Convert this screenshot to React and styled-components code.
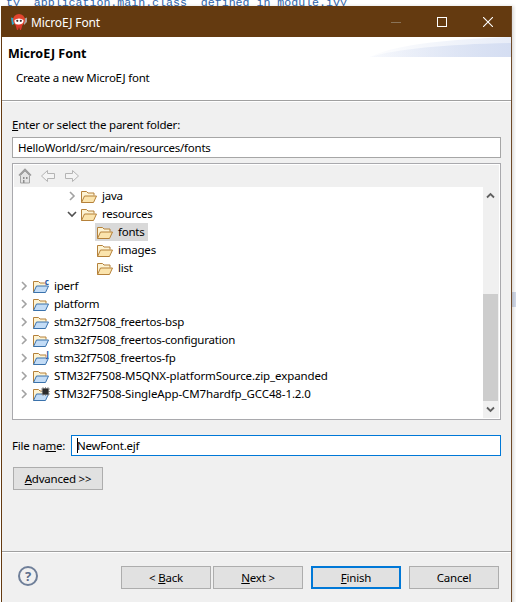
import React from "react";
import styled, { createGlobalStyle } from "styled-components";

const Global = createGlobalStyle`
  html, body { margin: 0; padding: 0; background: #fff; }
  body { font-family: "Noto Sans", sans-serif; font-size: 11.5px; letter-spacing: -0.22px; color: #000; }
`;

const Page = styled.div`
  position: relative;
  width: 516px;
  height: 602px;
  overflow: hidden;
  background: #fff;
`;

const BackdropCode = styled.div`
  height: 6px;
  overflow: hidden;
  padding-left: 6px;
  font: 11.6px/6px "Liberation Mono", monospace;
  letter-spacing: 0;
  color: #2f63a8;
  white-space: pre;
`;

const BackdropPatch = styled.div`
  position: absolute;
  left: 512px;
  top: 292px;
  width: 4px;
  height: 15px;
  background: #d3dbea;
`;

const Window = styled.div`
  position: relative;
  width: 511px;
  height: 600px;
  margin-left: 1px;
  box-sizing: border-box;
  border: 1px solid #643a10;
  border-right-color: #6f4a28;
  display: flex;
  flex-direction: column;
  background: #f0f0f0;
  box-shadow: 2px 0 3px rgba(0, 0, 0, 0.14);
`;

const TitleBar = styled.div`
  height: 30px;
  flex: none;
  background: #643a10;
  color: #fff;
  display: flex;
  align-items: center;
  padding-left: 8px;
`;

const TitleText = styled.span`
  margin-left: 3px;
  font-size: 12px;
  letter-spacing: -0.15px;
  flex: 1;
`;

const WinButton = styled.div`
  width: 46px;
  height: 30px;
  display: flex;
  align-items: center;
  justify-content: center;
`;

const Header = styled.div`
  height: 63px;
  flex: none;
  position: relative;
  background: #fff;
  border-bottom: 1px solid #a0a0a0;
  box-shadow: 0 1px 0 #fff;
  padding-left: 6px;
`;

const HeaderTitle = styled.div`
  font-weight: 700;
  font-size: 12.5px;
  letter-spacing: 0;
  line-height: 16px;
  padding-top: 9px;
`;

const HeaderSub = styled.div`
  line-height: 16px;
  margin-top: 8px;
  padding-left: 8px;
`;

const Swoosh = styled.svg`
  position: absolute;
  top: 0;
  right: 0;
`;

const Body = styled.div`
  flex: 1;
  padding: 17px 10px 0;
  display: flex;
  flex-direction: column;
`;

const FieldLabel = styled.div`
  line-height: 14px;
`;

const TextBox = styled.div`
  height: 21px;
  box-sizing: border-box;
  background: #fff;
  border: 1px solid ${(p) => (p.$focused ? "#0078d7" : "#a6a6a6")};
  padding-left: 5px;
  line-height: 18px;
  display: flex;
  align-items: center;
  flex: ${(p) => (p.$grow ? 1 : "none")};
  margin-top: ${(p) => p.$mt || 0}px;
`;

const Caret = styled.span`
  width: 1px;
  height: 15px;
  background: #000;
  margin-right: -1px;
`;

const TreeBox = styled.div`
  height: 257px;
  box-sizing: border-box;
  margin-top: 5px;
  border: 1px solid #a9a9ad;
  padding: 1px;
  background: #fff;
`;

const TreeInner = styled.div`
  height: 100%;
  background: #f0f0f0;
  display: flex;
  flex-direction: column;
`;

const NavBar = styled.div`
  height: 22px;
  flex: none;
  display: flex;
  align-items: center;
  gap: 8px;
  padding-left: 4px;
`;

const TreeArea = styled.div`
  flex: 1;
  display: flex;
  min-height: 0;
  padding-right: 1px;
`;

const TreeList = styled.div`
  flex: 1;
  background: #fff;
  overflow: hidden;
`;

const Row = styled.div`
  height: 18px;
  display: flex;
  align-items: center;
  padding-left: ${(p) => 4 + p.$depth * 16}px;
  white-space: nowrap;
`;

const Twist = styled.span`
  width: 12px;
  height: 18px;
  flex: none;
  display: flex;
  align-items: center;
  justify-content: center;
`;

const Item = styled.span`
  height: 18px;
  display: flex;
  align-items: center;
  padding: 0 3px 0 2px;
  margin-left: 1px;
  background: ${(p) => (p.$selected ? "#d9d9d9" : "transparent")};
`;

const FolderWrap = styled.span`
  position: relative;
  width: 16px;
  height: 16px;
  flex: none;
  display: block;
`;

const Badge = styled.span`
  position: absolute;
  top: -1px;
  right: 0;
  font-size: 8px;
  font-weight: 700;
  line-height: 9px;
  letter-spacing: 0;
  color: #2a5aa5;
  text-shadow: 0 0 1px #fff;
`;

const Chip = styled.svg`
  position: absolute;
  top: 1px;
  right: -1px;
`;

const Label = styled.span`
  margin-left: 5px;
  margin-bottom: 2px;
  letter-spacing: ${(p) => (p.$wide ? "-0.11px" : "inherit")};
`;

const ScrollBar = styled.div`
  width: 15px;
  flex: none;
  display: flex;
  flex-direction: column;
`;

const ScrollBtn = styled.div`
  height: 17px;
  flex: none;
  display: flex;
  align-items: center;
  justify-content: center;
`;

const ScrollTrack = styled.div`
  flex: 1;
  padding-top: ${(p) => p.$offset}px;
`;

const ScrollThumb = styled.div`
  height: ${(p) => p.$size}px;
  background: #cdcdcd;
`;

const FileRow = styled.div`
  display: flex;
  align-items: center;
  margin-top: 15px;
`;

const FileLabel = styled.span`
  width: 59px;
  flex: none;
`;

const Button = styled.div`
  width: 90px;
  height: 23px;
  box-sizing: border-box;
  background: #e1e1e1;
  border: ${(p) => (p.$primary ? "2px solid #0078d7" : "1px solid #adadad")};
  display: flex;
  align-items: center;
  justify-content: center;
  line-height: 16px;
`;

const AdvancedWrap = styled.div`
  margin: 11px 0 0 1px;
`;

const Footer = styled.div`
  height: 54px;
  box-sizing: border-box;
  flex: none;
  border-top: 1px solid #a0a0a0;
  box-shadow: inset 0 1px 0 #fff;
  display: flex;
  align-items: flex-start;
  padding: 14px 12px 0 16px;
`;

const HelpCircle = styled.div`
  width: 20px;
  height: 20px;
  box-sizing: border-box;
  border: 2px solid #6f7f99;
  border-radius: 50%;
  color: #5b6c8a;
  font-weight: 700;
  font-size: 13px;
  letter-spacing: 0;
  line-height: 16px;
  text-align: center;
  flex: none;
  margin-right: auto;
`;

const FooterButtons = styled.div`
  display: flex;
  gap: 2px;
`;

const ButtonGroup = styled.div`
  display: flex;
  gap: 8px;
  margin-left: 8px;
`;

const Mn = styled.span`
  text-decoration: underline;
`;

const Logo = () => (
  <svg width="18" height="18" viewBox="0 0 18 18">
    <path d="M1 4.500l3.500 1v5l-2.500 1.500z" fill="#2fa6c9" />
    <path d="M13.500 6l3.500-1.500v4.500l-3 3z" fill="#a9a4a0" />
    <circle cx="9" cy="7" r="6" fill="#e2452f" />
    <path d="M4.500 7q4.500-3 9 0q.5 4-4.500 4.500t-4.500-4.500z" fill="#fff" />
    <circle cx="7.300" cy="7.800" r="1.100" fill="#402a2a" />
    <circle cx="10.800" cy="7.800" r="1.100" fill="#402a2a" />
    <path d="M5.500 12l1.500 5h1l1-3 1 3h1l1.500-5z" fill="#d8392b" />
  </svg>
);

const Minimize = () => (
  <svg width="10" height="10" viewBox="0 0 10 10">
    <path d="M0 5.500h10" stroke="#8a7358" strokeWidth="1" />
  </svg>
);
const Maximize = () => (
  <svg width="10" height="10" viewBox="0 0 10 10">
    <rect x=".5" y=".5" width="9" height="9" fill="none" stroke="#fff" />
  </svg>
);
const Close = () => (
  <svg width="10" height="10" viewBox="0 0 10 10">
    <path d="M0 0l10 10M10 0L0 10" stroke="#fff" strokeWidth="1.100" />
  </svg>
);

const Home = () => (
  <svg width="14" height="16" viewBox="0 0 14 16">
    <path d="M1 7.500L7 1.500l6 6" fill="none" stroke="#9a9a9a" strokeWidth="1.600" />
    <path d="M2.500 7.500V15h9V7.500L7 3z" fill="#e4e4e4" stroke="#a3a3a3" />
    <path d="M5 9h1.500v2H5zM8 9h1.500v2H8zM5 12h1.500v3H5z" fill="#8d8d8d" />
  </svg>
);
const NavArrow = ({ flip }) => (
  <svg width="16" height="14" viewBox="0 0 16 14" style={flip ? { transform: "scaleX(-1)" } : undefined}>
    <path d="M7.500 1.500L1.500 7l6 5.500V9.500h7v-5h-7z" fill="#f4f4f4" stroke="#b4b4b4" />
  </svg>
);

const ChevronRight = () => (
  <svg width="8" height="10" viewBox="0 0 8 10">
    <path d="M2 1l4 4-4 4" fill="none" stroke="#a2a2a2" strokeWidth="1.600" />
  </svg>
);
const ChevronDown = () => (
  <svg width="10" height="8" viewBox="0 0 10 8">
    <path d="M1 2l4 4 4-4" fill="none" stroke="#505050" strokeWidth="1.600" />
  </svg>
);
const ScrollArrow = ({ up }) => (
  <svg width="9" height="7" viewBox="0 0 9 7">
    <path d={up ? "M1 5.500l3.500-3.500 3.500 3.500" : "M1 1.500l3.500 3.500 3.500-3.500"} fill="none" stroke="#606060" strokeWidth="1.800" />
  </svg>
);

const Folder = ({ project }) => (
  <svg width="16" height="16" viewBox="0 0 16 16" style={{ display: "block" }}>
    <path d="M.5 14.500V3.500h5l1.500 1.500h6v2.500" fill="#fdf3d3" stroke="#b5813a" />
    <path
      d="M.5 14.500L3.500 8H15.500L12.500 14.500z"
      fill={project ? "#c3dcf6" : "#fbe4ad"}
      stroke={project ? "#3a72ac" : "#b5813a"}
    />
  </svg>
);

const rows = [
  { name: "java", depth: 3, twist: "right" },
  { name: "resources", depth: 3, twist: "down" },
  { name: "fonts", depth: 4, selected: true },
  { name: "images", depth: 4 },
  { name: "list", depth: 4 },
  { name: "iperf", depth: 0, twist: "right", project: true, badge: "c" },
  { name: "platform", depth: 0, twist: "right", project: true },
  { name: "stm32f7508_freertos-bsp", depth: 0, twist: "right", project: true },
  { name: "stm32f7508_freertos-configuration", depth: 0, twist: "right", project: true },
  { name: "stm32f7508_freertos-fp", depth: 0, twist: "right", project: true, badge: "J" },
  { name: "STM32F7508-M5QNX-platformSource.zip_expanded", depth: 0, twist: "right", project: true, wide: true },
  { name: "STM32F7508-SingleApp-CM7hardfp_GCC48-1.2.0", depth: 0, twist: "right", project: true, chip: true, wide: true },
];

export default function App() {
  return (
    <Page>
      <Global />
      <BackdropCode>{"ty  application.main.class  defined in module.ivy"}</BackdropCode>
      <BackdropPatch />
      <Window>
        <TitleBar>
          <Logo />
          <TitleText>MicroEJ Font</TitleText>
          <WinButton><Minimize /></WinButton>
          <WinButton><Maximize /></WinButton>
          <WinButton><Close /></WinButton>
        </TitleBar>
        <Header>
          <HeaderTitle>MicroEJ Font</HeaderTitle>
          <HeaderSub>Create a new MicroEJ font</HeaderSub>
          <Swoosh width="141" height="20" viewBox="0 0 141 20">
            <defs>
              <linearGradient id="sw" x1="0" x2="1" y1="0" y2="0">
                <stop offset="0" stopColor="#d5def2" stopOpacity="0.1" />
                <stop offset="1" stopColor="#d5def2" />
              </linearGradient>
            </defs>
            <path d="M0 20Q30 4 141 0V20z" fill="url(#sw)" opacity="0.55" />
            <path d="M0 20Q40 8 141 6V20z" fill="url(#sw)" />
          </Swoosh>
        </Header>
        <Body>
          <FieldLabel><Mn>E</Mn>nter or select the parent folder:</FieldLabel>
          <TextBox $mt={5}>HelloWorld/src/main/resources/fonts</TextBox>
          <TreeBox>
            <TreeInner>
              <NavBar>
                <Home />
                <NavArrow />
                <NavArrow flip />
              </NavBar>
              <TreeArea>
                <TreeList>
                  {rows.map((r) => (
                    <Row key={r.name} $depth={r.depth}>
                      <Twist>
                        {r.twist === "right" && <ChevronRight />}
                        {r.twist === "down" && <ChevronDown />}
                      </Twist>
                      <Item $selected={r.selected}>
                        <FolderWrap>
                          <Folder project={r.project} />
                          {r.badge && <Badge>{r.badge}</Badge>}
                          {r.chip && (
                            <Chip width="9" height="9" viewBox="0 0 9 9">
                              <path d="M0 2h9M0 4.500h9M0 7h9M2 0v9M4.500 0v9M7 0v9" stroke="#9a9a9a" strokeWidth="1" />
                              <rect x="1.500" y="1.500" width="6" height="6" fill="#2b2b2b" />
                            </Chip>
                          )}
                        </FolderWrap>
                        <Label $wide={r.wide}>{r.name}</Label>
                      </Item>
                    </Row>
                  ))}
                </TreeList>
                <ScrollBar>
                  <ScrollBtn><ScrollArrow up /></ScrollBtn>
                  <ScrollTrack $offset={90}><ScrollThumb $size={107} /></ScrollTrack>
                  <ScrollBtn><ScrollArrow /></ScrollBtn>
                </ScrollBar>
              </TreeArea>
            </TreeInner>
          </TreeBox>
          <FileRow>
            <FileLabel>File na<Mn>m</Mn>e:</FileLabel>
            <TextBox $focused $grow><Caret />NewFont.ejf</TextBox>
          </FileRow>
          <AdvancedWrap>
            <Button><span><Mn>A</Mn>dvanced &gt;&gt;</span></Button>
          </AdvancedWrap>
        </Body>
        <Footer>
          <HelpCircle>?</HelpCircle>
          <FooterButtons>
            <Button><span>&lt; <Mn>B</Mn>ack</span></Button>
            <Button><span><Mn>N</Mn>ext &gt;</span></Button>
          </FooterButtons>
          <ButtonGroup>
            <Button $primary><span><Mn>F</Mn>inish</span></Button>
            <Button>Cancel</Button>
          </ButtonGroup>
        </Footer>
      </Window>
    </Page>
  );
}
